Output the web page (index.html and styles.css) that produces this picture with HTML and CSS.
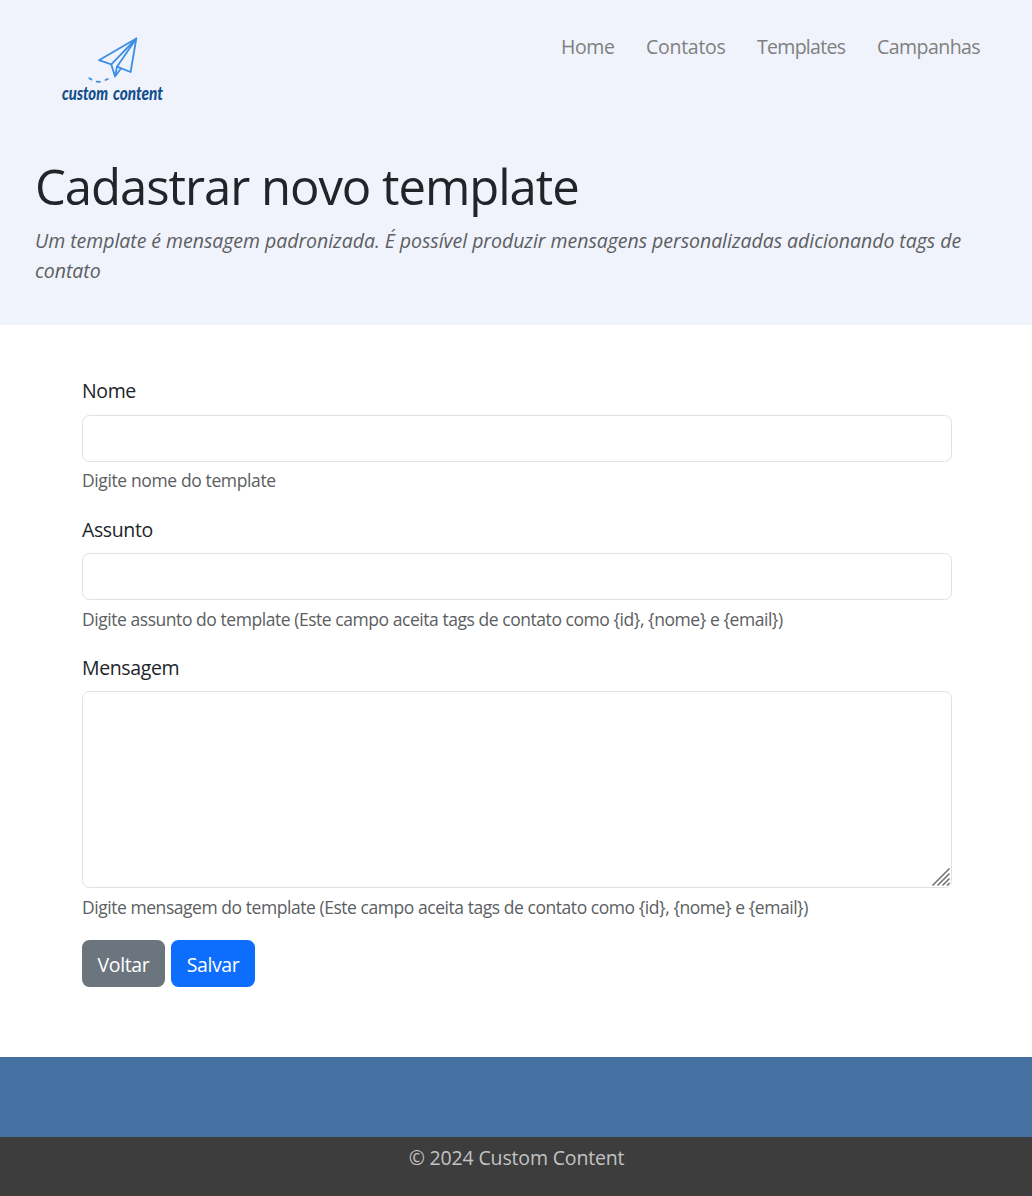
FILE: index.html
```html
<!DOCTYPE html>
<html lang="pt-BR">
<head>
<meta charset="utf-8">
<title>Cadastrar novo template</title>
<link rel="stylesheet" href="styles.css">
</head>
<body>
<header class="hero">
  <div class="topbar">
    <svg class="logo" width="125" height="85" viewBox="0 0 125 85" role="img" aria-label="custom content">
      <g fill="none" stroke="#3d8fe3" stroke-width="1.8" stroke-linejoin="round" stroke-linecap="round">
        <path d="M86.3 13.5 49 35.2l12.3 4.2z"/>
        <path d="M86.3 13.5 80.6 47 67 41.7z"/>
        <path d="M61.3 39.4 65 51.5 67 41.7M65 51.5l5.8-7.8"/>
        <path d="M39.3 53.2l2.2 1.4M46.6 56.6l3.4.2M55.5 55l2.3-1"/>
      </g>
      <text class="logo-text" x="12" y="74.5" textLength="46" lengthAdjust="spacingAndGlyphs">custom</text>
      <text class="logo-text" x="63" y="74.5" textLength="50" lengthAdjust="spacingAndGlyphs">content</text>
    </svg>
    <nav class="nav">
      <a class="home">Home</a><a class="contacts">Contatos</a><a class="templates">Templates</a><a class="campaigns">Campanhas</a>
    </nav>
  </div>
  <h1 class="title">Cadastrar novo template</h1>
  <p class="lead">Um template é mensagem padronizada. É possível produzir mensagens personalizadas adicionando tags de<br>contato</p>
</header>
<main class="form">
  <div class="field">
    <label class="label" for="nome">Nome</label>
    <input class="control" id="nome">
    <div class="help short">Digite nome do template</div>
  </div>
  <div class="field">
    <label class="label low" for="assunto">Assunto</label>
    <input class="control" id="assunto">
    <div class="help">Digite assunto do template (Este campo aceita tags de contato como {id}, {nome} e {email})</div>
  </div>
  <div class="field message">
    <label class="label low" for="mensagem">Mensagem</label>
    <div class="area-wrap">
      <textarea class="control area" id="mensagem"></textarea>
      <svg class="grip" width="20" height="20" viewBox="0 0 20 20"><path d="M1.5 18.5 18.5 1.5M6.5 18.5l12-12M11.5 18.5l7-7M16 18.5l2.5-2.5" stroke="#6e6e6e" stroke-width="1.5"/></svg>
    </div>
    <div class="help">Digite mensagem do template (Este campo aceita tags de contato como {id}, {nome} e {email})</div>
  </div>
  <div class="actions">
    <button class="btn back">Voltar</button>
    <button class="btn save">Salvar</button>
  </div>
</main>
<div class="band"></div>
<footer class="footer">© 2024 Custom Content</footer>
</body>
</html>
```
FILE: styles.css
```css
* { box-sizing: border-box; }
body {
  margin: 0;
  min-height: 1196px;
  display: flex;
  flex-direction: column;
  background: #fff;
  color: #212529;
  font: 19.5px/30px "Open Sans", "Noto Sans", sans-serif;
  letter-spacing: -0.38px;
}
.hero { height: 325px; padding: 0 35px; background: #f0f3fb; }
.topbar {
  height: 122px;
  padding: 25px 17px 0 15px;
  display: flex;
  justify-content: space-between;
  border-bottom: 1px solid #f1f2f6;
}
.logo { display: block; letter-spacing: 0; }
.logo-text { font: italic 900 18px "Lato", sans-serif; fill: #124f8c; }
.nav { display: flex; gap: 31px; padding-top: 7px; color: #808080; white-space: nowrap; }
.home { width: 54px; }
.contacts { width: 80px; letter-spacing: -0.27px; }
.templates { width: 89px; letter-spacing: -0.7px; }
.campaigns { width: 103px; letter-spacing: -0.54px; }
.title {
  margin: 34px 0 10px;
  font-size: 49px;
  line-height: 60px;
  font-weight: 400;
  letter-spacing: -1.02px;
  white-space: nowrap;
}
.lead { margin: 0; font-style: italic; letter-spacing: -0.04px; color: #5b5e62; white-space: nowrap; }
.form { height: 732px; padding: 51px 80px 0 82px; }
.field { height: 138px; }
.message { height: 288px; }
.label { display: block; height: 39px; }
.low { padding-top: 1px; }
.control {
  display: block;
  width: 100%;
  height: 47px;
  padding: 7px 15px;
  border: 1px solid #dee2e6;
  border-radius: 7.5px;
  background: #fff;
  font: inherit;
}
.area-wrap { position: relative; }
.area { height: 197px; resize: none; }
.grip { position: absolute; right: 1px; bottom: 1px; }
.help { margin-top: 6px; font-size: 17.5px; line-height: 26px; letter-spacing: -0.45px; color: #5b5e62; white-space: nowrap; }
.short { margin-top: 5px; letter-spacing: -0.38px; }
.actions { display: flex; gap: 6px; }
.btn {
  width: 84px;
  height: 47px;
  padding: 2px 0 0;
  border: 0;
  border-radius: 7.5px;
  color: #fff;
  font: inherit;
  letter-spacing: inherit;
}
.back { width: 83px; background: #6c757d; }
.save { background: #0d6efd; }
.band { height: 80px; background: #4571a2; }
.footer { height: 59px; padding: 6px 0 0 1px; background: #3d3d3d; color: #c3c3c3; text-align: center; letter-spacing: -0.16px; }
```
